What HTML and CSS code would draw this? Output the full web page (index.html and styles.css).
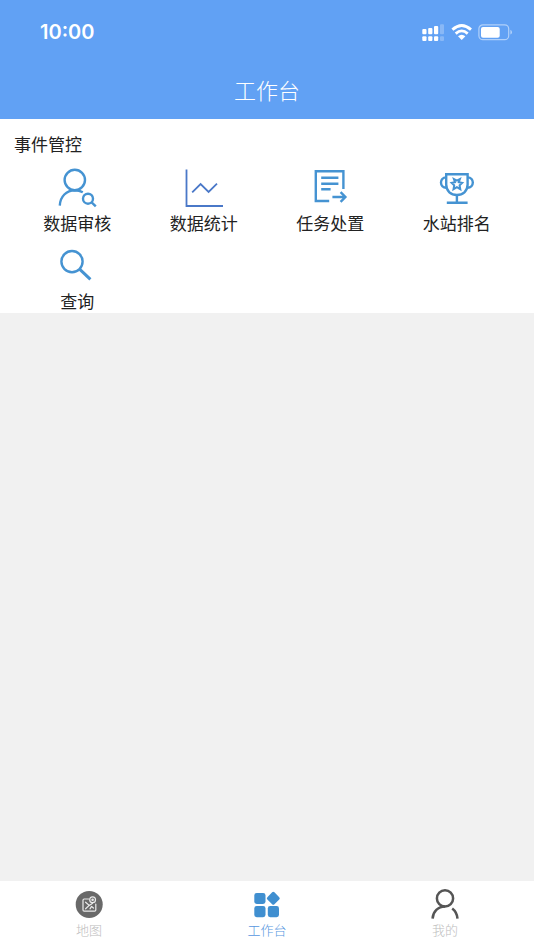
FILE: index.html
```html
<!DOCTYPE html>
<html lang="zh-CN">
<head>
<meta charset="utf-8">
<meta name="viewport" content="width=device-width, initial-scale=1">
<title>工作台</title>
<link rel="stylesheet" href="styles.css">
</head>
<body>
<header class="header">
  <div class="status">
    <time class="clock">10:00</time>
    <svg class="status-icons" viewBox="0 0 90 20" aria-hidden="true">
      <g fill="#fff">
        <rect x="0.3" y="7" width="4.2" height="5.3" rx="1"/>
        <rect x="6.2" y="6" width="4.2" height="6.3" rx="1"/>
        <rect x="12" y="4" width="4.2" height="8.3" rx="1"/>
        <rect x="0.3" y="14.2" width="4.2" height="4.8" rx="1"/>
        <rect x="6.2" y="14.2" width="4.2" height="4.8" rx="1"/>
        <rect x="12" y="14.2" width="4.2" height="4.8" rx="1"/>
        <g opacity=".25">
          <rect x="18" y="2.3" width="4" height="10" rx="1"/>
          <rect x="18" y="14.2" width="4" height="4.8" rx="1"/>
        </g>
        <path d="M39.7 18 L36 14.2 Q39.7 11.2 43.4 14.2 Z"/>
        <rect x="59" y="5" width="18.7" height="10.7" rx="2"/>
        <path d="M88.4 7.8 Q90 8.6 90 10.2 Q90 11.8 88.4 12.6 Z" opacity=".5"/>
      </g>
      <g fill="none" stroke="#fff">
        <path d="M30.4 7.6 Q39.7 -.6 49 7.6" stroke-width="2.9"/>
        <path d="M33.7 11.6 Q39.7 6.2 45.7 11.6" stroke-width="2.8"/>
        <rect x="56.9" y="2.8" width="29.8" height="14.9" rx="4" stroke-width="1.2" opacity=".5"/>
      </g>
    </svg>
  </div>
  <h1 class="title">工作台</h1>
</header>

<main class="main">
  <section class="panel">
    <h2 class="panel-title">事件管控</h2>
    <div class="apps">
      <button class="app" type="button">
        <svg class="app-icon" viewBox="0 0 44 45" aria-hidden="true">
          <circle cx="19.8" cy="14" r="10.2"/>
          <path d="M4.8 39.6 C5.2 30.4 11.5 24.4 19.8 24.2 C22.8 24.2 25.4 24.9 27.8 26.2"/>
          <circle cx="33" cy="32.7" r="5"/>
          <path d="M36.6 36.3 L40.8 40.4"/>
        </svg>
        <span class="app-label">数据审核</span>
      </button>
      <button class="app" type="button">
        <svg class="app-icon app-icon-chart" viewBox="0 0 44 45" aria-hidden="true">
          <path d="M4.5 3.5 V40 H41"/>
          <path d="M10.2 26.4 L18.6 18 L26.6 26 L35 17.7"/>
        </svg>
        <span class="app-label">数据统计</span>
      </button>
      <button class="app" type="button">
        <svg class="app-icon" viewBox="0 0 44 45" aria-hidden="true">
          <path d="M35.4 23 V5.3 H7.8 V35 H21.2"/>
          <path d="M13.2 11.7 H30.4 M13.2 17.7 H30.4 M13.2 23.3 H22.6"/>
          <path d="M24.4 31 H37 M32.6 26.2 L37.4 31 L32.6 35.8"/>
        </svg>
        <span class="app-label">任务处置</span>
      </button>
      <button class="app" type="button">
        <svg class="app-icon" viewBox="0 0 44 45" aria-hidden="true">
          <path d="M11.2 8.2 H32.6 V18.5 C32.6 25.2 27.8 29 21.9 29 C16 29 11.2 25.2 11.2 18.5 Z"/>
          <path d="M11.2 11.4 C4.2 11.4 4.2 21.8 11.4 21.8 M32.6 11.4 C39.6 11.4 39.6 21.8 32.4 21.8"/>
          <path d="M21.9 29 V36.8 M11.8 36.8 H32.6"/>
          <path d="M21.9 21.2 L18.5 23.2 L19.2 19.4 L16.6 16.8 L20 16.2 L18.9 13 L21.9 14.6 L24.9 13 L23.8 16.2 L27.2 16.8 L24.6 19.4 L25.3 23.2 Z" stroke-width="2"/>
        </svg>
        <span class="app-label">水站排名</span>
      </button>
      <button class="app" type="button">
        <svg class="app-icon" viewBox="0 0 44 45" aria-hidden="true">
          <circle cx="17" cy="17.6" r="10.6"/>
          <path d="M24.8 25.4 L35.4 35.4" stroke-width="3"/>
        </svg>
        <span class="app-label">查询</span>
      </button>
    </div>
  </section>
</main>

<nav class="tabs">
  <a class="tab" href="#map">
    <svg class="tab-icon" viewBox="0 0 30 30" aria-hidden="true">
      <circle cx="15.2" cy="15.4" r="13.5" fill="#696969"/>
      <g fill="none" stroke="#ececec" stroke-width="1.2" stroke-linejoin="round" stroke-linecap="round">
        <path d="M14.6 10 H10.2 Q9 10 9 11.2 V21 Q9 22.2 10.2 22.2 H20.6 Q21.8 22.2 21.8 21 V15"/>
        <circle cx="18.6" cy="10.8" r="2.9"/>
        <circle cx="18.6" cy="10.8" r=".7"/>
        <path d="M11.6 13.2 L15.2 16.4 L11.6 19.8 M15.2 16.4 L18.6 14.2 M16 19.8 L17.6 17.4 L19.4 19"/>
      </g>
    </svg>
    <span class="tab-label">地图</span>
  </a>
  <a class="tab tab-active" href="#workbench" aria-current="page">
    <svg class="tab-icon" viewBox="0 0 30 30" fill="#408fd0" aria-hidden="true">
      <rect x="2.3" y="4" width="11.2" height="11" rx="2.4"/>
      <rect x="2.3" y="17" width="11.2" height="11.2" rx="2.4"/>
      <rect x="15.8" y="17" width="11.2" height="11.2" rx="2.4"/>
      <rect x="16.3" y="4.3" width="10" height="10" rx="1.6" transform="rotate(45 21.3 9.3)"/>
    </svg>
    <span class="tab-label">工作台</span>
  </a>
  <a class="tab" href="#mine">
    <svg class="tab-icon" viewBox="0 0 30 30" fill="none" stroke="#555" stroke-width="2.5" aria-hidden="true">
      <circle cx="15" cy="9.4" r="8.1"/>
      <path d="M2.6 29.6 C3 22.6 8 17.6 15 17.5 M22.2 19.4 C25.4 21.8 27.2 25.2 27.5 29.6"/>
    </svg>
    <span class="tab-label">我的</span>
  </a>
</nav>
</body>
</html>
```
FILE: styles.css
```css
* {
  box-sizing: border-box;
}

body {
  margin: 0;
  min-height: 100vh;
  display: flex;
  flex-direction: column;
  background: #f1f1f1;
  color: #222;
  font-family: "Noto Sans CJK SC", sans-serif;
}

.header {
  padding-bottom: 4px;
  background: #61a1f4;
  color: #fff;
}

.status {
  display: flex;
  align-items: center;
  justify-content: space-between;
  height: 64px;
  padding: 0 22px 0 40px;
}

.clock {
  font-family: Inter, sans-serif;
  font-size: 20px;
  font-weight: 600;
  line-height: 24px;
}

.status-icons {
  width: 90px;
  height: 20px;
}

.title {
  margin: 0;
  font-size: 22px;
  font-weight: 300;
  line-height: 51px;
  text-align: center;
}

.main {
  flex: 1;
}

.panel {
  padding: 13px 14px 0;
  background: #fff;
}

.panel-title {
  margin: 0 0 10px;
  font-size: 17px;
  font-weight: 400;
  line-height: 24px;
}

.apps {
  display: grid;
  grid-template-columns: repeat(4, 1fr);
  row-gap: 9px;
}

.app {
  display: flex;
  flex-direction: column;
  align-items: center;
  padding: 0;
  border: 0;
  background: none;
  color: inherit;
  font: inherit;
  cursor: pointer;
}

.app-icon {
  width: 44px;
  height: 45px;
  fill: none;
  stroke: #4593d2;
  stroke-width: 2.4;
}

.app-icon-chart {
  stroke: #4a78c8;
  stroke-width: 1.8;
}

.app-label {
  font-size: 17px;
  line-height: 24px;
}

.tabs {
  display: flex;
  padding: 8px 0 11px;
  background: #fff;
}

.tab {
  flex: 1;
  display: flex;
  flex-direction: column;
  align-items: center;
  gap: 2px;
  color: #bdbdbd;
  text-decoration: none;
}

.tab-active {
  color: #5797e0;
}

.tab-icon {
  width: 30px;
  height: 30px;
}

.tab-label {
  font-size: 13px;
  font-weight: 300;
  line-height: 18px;
}
```
